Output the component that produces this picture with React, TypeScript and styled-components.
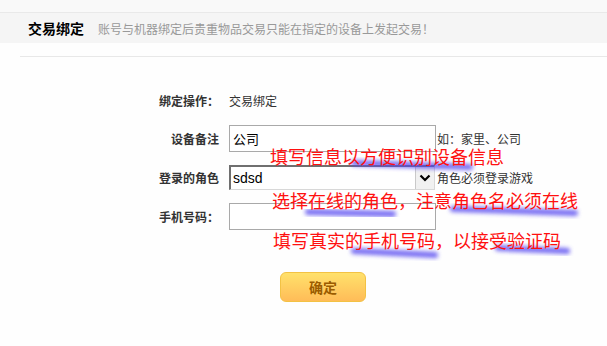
import { FC } from 'react';
import styled, { createGlobalStyle } from 'styled-components';

const GlobalStyle = createGlobalStyle`
  body {
    margin: 0;
    background: #fff;
    font-family: "Noto Sans CJK SC", "Liberation Sans", sans-serif;
  }
`;

const Page = styled.div`
  position: relative;
  width: 607px;
  height: 346px;
  overflow: hidden;
  background: #fefefe;
`;

const TopStrip = styled.div`
  height: 12px;
  background: #f9f9f9;
  border-bottom: 1px solid #e9e9e9;
`;

const Header = styled.div`
  display: flex;
  align-items: center;
  height: 30px;
  padding-left: 28px;
  background: #f5f5f5;
`;

const Title = styled.h2`
  margin: 0 14px 0 0;
  font-size: 14px;
  font-weight: 700;
  color: #000;
`;

const Subtitle = styled.span`
  font-size: 12px;
  color: #999;
`;

const Divider = styled.div`
  height: 1px;
  margin: 13px 0 0 20px;
  background: #e8e8e8;
`;

const Form = styled.div`
  display: grid;
  grid-template-columns: 229px 207px 1fr;
  grid-template-rows: 24px 27px 25px 27px;
  row-gap: 13px;
  padding-top: 31px;
  align-items: center;
`;

const Label = styled.span`
  padding-right: 10px;
  text-align: right;
  font-size: 12px;
  font-weight: 700;
  color: #333;
`;

const Value = styled.span`
  font-size: 12px;
  color: #333;
`;

const Hint = styled.span`
  padding-left: 1px;
  font-size: 12px;
  line-height: 13px;
  color: #333;
  white-space: nowrap;
`;

const TextInput = styled.input`
  box-sizing: border-box;
  width: 207px;
  height: 27px;
  padding: 0 3px;
  border: 1px solid #a9a9a9;
  font-family: inherit;
  font-size: 13px;
  color: #000;
  background: #fff;
  outline: none;
`;

const SelectBox = styled.div`
  box-sizing: border-box;
  display: flex;
  align-items: stretch;
  width: 206px;
  height: 25px;
  border-style: solid;
  border-width: 2px 1px 1px 2px;
  border-color: #6f6f6f #d8d8d8 #d8d8d8 #6f6f6f;
  background: #fff;
`;

const SelectText = styled.span`
  flex: 1;
  padding: 3px 0 0 2px;
  font-family: "Liberation Sans", sans-serif;
  font-size: 14px;
  color: #000;
`;

const ArrowBox = styled.span`
  display: flex;
  align-items: center;
  justify-content: center;
  width: 18px;
  border-left: 1px solid #c9c9c9;
  background: #f1f1f1;
`;

const SubmitButton = styled.button`
  box-sizing: border-box;
  width: 86px;
  height: 30px;
  margin: 42px 0 0 280px;
  border: 1px solid #f3c244;
  border-radius: 6px;
  background: linear-gradient(#ffe16b, #ffbc58);
  font-family: inherit;
  font-size: 14px;
  font-weight: 700;
  color: #9b5c00;
`;

const Overlay = styled.div`
  position: absolute;
  inset: 0;
  pointer-events: none;
`;

const Note = styled.span<{ $top: number; $left: number }>`
  position: absolute;
  top: ${p => p.$top}px;
  left: ${p => p.$left}px;
  font-size: 18px;
  line-height: 16px;
  color: #ff1010;
  white-space: nowrap;
`;

const MarkerLayer = styled.svg`
  position: absolute;
  inset: 0;
`;

// hand-drawn marker strokes under the key words
const strokes = [
  'M354 163 L470 167',
  'M308 212 L393 214',
  'M453 209 L575 213',
  'M354 251 L435 255',
  'M498 248 L567 251',
];

const Chevron: FC = () => (
  <svg width="12" height="8" viewBox="0 0 12 8">
    <path d="M1.5 1.5 L6 6 L10.5 1.5" fill="none" stroke="#000" strokeWidth="2.2" />
  </svg>
);

const App: FC = () => (
  <Page>
    <GlobalStyle />
    <TopStrip />
    <Header>
      <Title>交易绑定</Title>
      <Subtitle>账号与机器绑定后贵重物品交易只能在指定的设备上发起交易！</Subtitle>
    </Header>
    <Divider />

    <Form>
      <Label>绑定操作：</Label>
      <Value>交易绑定</Value>
      <span />

      <Label>设备备注</Label>
      <TextInput defaultValue="公司" />
      <Hint>如：家里、公司</Hint>

      <Label>登录的角色</Label>
      <SelectBox>
        <SelectText>sdsd</SelectText>
        <ArrowBox>
          <Chevron />
        </ArrowBox>
      </SelectBox>
      <Hint>角色必须登录游戏</Hint>

      <Label>手机号码：</Label>
      <TextInput />
      <span />
    </Form>

    <SubmitButton>确定</SubmitButton>

    <Overlay>
      <MarkerLayer width="607" height="346">
        <defs>
          <filter id="marker-blur" x="-10%" y="-150%" width="120%" height="400%">
            <feGaussianBlur stdDeviation="2.2" />
          </filter>
        </defs>
        {strokes.map(d => (
          <path
            key={d}
            d={d}
            stroke="#5546f0"
            strokeWidth="6"
            strokeLinecap="round"
            fill="none"
            opacity="0.8"
            filter="url(#marker-blur)"
          />
        ))}
      </MarkerLayer>
      <Note $top={148} $left={270}>填写信息以方便识别设备信息</Note>
      <Note $top={192} $left={272}>选择在线的角色，注意角色名必须在线</Note>
      <Note $top={232} $left={273}>填写真实的手机号码，以接受验证码</Note>
    </Overlay>
  </Page>
);

export default App;
